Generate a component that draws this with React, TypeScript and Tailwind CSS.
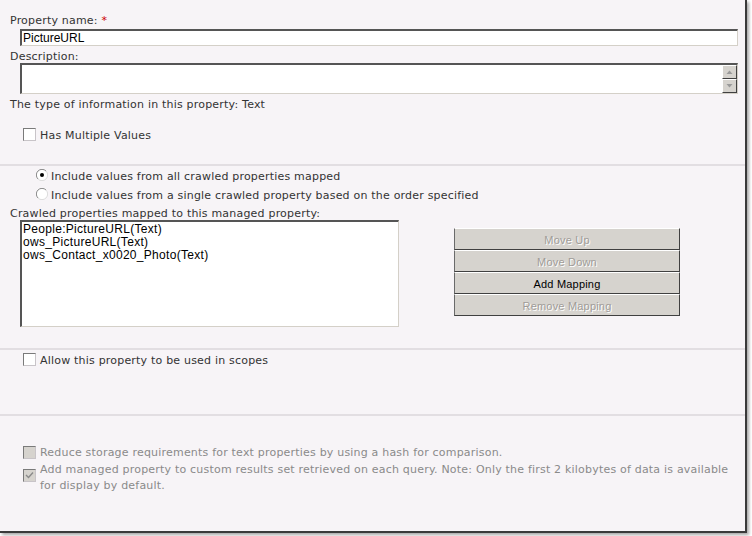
import React from "react";

const labelFont = "font-['DejaVu_Sans',Verdana,sans-serif] text-[11px] tracking-[0.2px] leading-[16px]";
const fieldFont = "font-['Liberation_Sans',Arial,sans-serif] text-[12px] text-black";

function Separator() {
  return <div className="h-[2px] w-full bg-[#e2dee2]" />;
}

function Checkbox({ checked = false, disabled = false }: { checked?: boolean; disabled?: boolean }) {
  return (
    <span
      className={`flex h-[13px] w-[13px] shrink-0 items-center justify-center border border-t-[#7a7a7a] border-l-[#7a7a7a] border-b-[#c8c4c8] border-r-[#c8c4c8] ${
        disabled ? "bg-[#d6d3ce]" : "bg-white"
      }`}
    >
      {checked && (
        <svg width="9" height="9" viewBox="0 0 9 9">
          <path d="M1 4 L3.5 6.5 L8 1.5" fill="none" stroke={disabled ? "#8a8a8a" : "#000"} strokeWidth="1.4" />
        </svg>
      )}
    </span>
  );
}

function Radio({ checked = false }: { checked?: boolean }) {
  return (
    <svg width="12" height="12" viewBox="0 0 12 12" className="mt-[2px] shrink-0">
      <circle cx="6" cy="6" r="5.5" fill="#fff" />
      <path d="M10 2 A5.5 5.5 0 0 0 2 10" fill="none" stroke="#8a8a8a" strokeWidth="1" />
      <path d="M2 10 A5.5 5.5 0 0 0 10 2" fill="none" stroke="#dcdcdc" strokeWidth="1" />
      {checked && <circle cx="6" cy="6" r="2" fill="#000" />}
    </svg>
  );
}

function ScrollButton({ up }: { up?: boolean }) {
  return (
    <div className="flex h-[14px] w-[15px] items-center justify-center border border-t-white border-l-white border-b-[#404040] border-r-[#404040] bg-[#d6d3ce]">
      <svg width="7" height="4" viewBox="0 0 7 4">
        <path d={up ? "M0.5 4 L3.5 0.5 L6.5 4 Z" : "M0.5 0 L3.5 3.5 L6.5 0 Z"} fill="#9a9a9a" />
      </svg>
    </div>
  );
}

function ActionButton({ label, enabled = false }: { label: string; enabled?: boolean }) {
  return (
    <div
      className={`flex h-[22px] w-[226px] items-center justify-center border border-t-white border-l-[#6a6a6a] border-b-[#404040] border-r-[#404040] bg-[#d6d3ce] pt-[1px] font-['Liberation_Sans',Tahoma,sans-serif] text-[11px] ${
        enabled ? "text-black" : "text-[#a09c98] [text-shadow:1px_1px_0_#fff]"
      }`}
    >
      {label}
    </div>
  );
}

function CheckRow({ label, className = "" }: { label: string; className?: string }) {
  return (
    <div className={`ml-[13px] flex h-[16px] items-start gap-[4px] ${className}`}>
      <span className="mt-[2px]">
        <Checkbox />
      </span>
      <span className="pt-[2px]">{label}</span>
    </div>
  );
}

export default function App() {
  const crawled = ["People:PictureURL(Text)", "ows_PictureURL(Text)", "ows_Contact_x0020_Photo(Text)"];

  return (
    <div className="h-[536px] w-[752px] bg-white">
      <div className="h-[533px] w-[747px] border-r-2 border-b-2 border-[#3a3a3a] bg-[#f7f4f7] text-[#333] shadow-[2px_2px_3px_rgba(0,0,0,0.35)]">
        {/* name / description */}
        <div className={`px-[10px] pt-[11px] ${labelFont}`}>
          <div className="h-[16px] pt-[2px]">
            Property name: <span className="text-[#cc0000]">*</span>
          </div>
          <div
            className={`ml-[10px] mt-[2px] flex h-[17px] w-[718px] items-center border-t-2 border-l-2 border-b border-r border-t-[#555] border-l-[#555] border-b-[#d4d0c8] border-r-[#d4d0c8] bg-white pl-[1px] tracking-normal ${fieldFont}`}
          >
            PictureURL
          </div>
          <div className="mt-[1px] h-[16px] pt-[2px]">Description:</div>
          <div className="ml-[10px] flex h-[31px] w-[718px] justify-end border-t-2 border-l-2 border-b border-r border-t-[#555] border-l-[#555] border-b-[#d4d0c8] border-r-[#d4d0c8] bg-white">
            <div className="flex flex-col">
              <ScrollButton up />
              <ScrollButton />
            </div>
          </div>
          <div className="mt-[1px] h-[16px] pt-[2px]">The type of information in this property: Text</div>
          <CheckRow label="Has Multiple Values" className="mt-[15px]" />
          <div className="h-[22px]" />
        </div>
        <Separator />

        {/* crawled property mappings */}
        <div className={`px-[10px] ${labelFont}`}>
          <div className="ml-[26px] mt-[1px] flex h-[16px] items-start gap-[3px]">
            <Radio checked />
            <span className="pt-[2px]">Include values from all crawled properties mapped</span>
          </div>
          <div className="ml-[26px] mt-[3px] flex h-[16px] items-start gap-[3px]">
            <Radio />
            <span className="pt-[2px]">Include values from a single crawled property based on the order specified</span>
          </div>
          <div className="mt-[2px] h-[16px] pt-[2px]">Crawled properties mapped to this managed property:</div>
          <div className="ml-[10px] flex items-start">
            <div className="h-[107px] w-[379px] border-t-2 border-l-2 border-b border-r border-t-[#555] border-l-[#555] border-b-[#d4d0c8] border-r-[#d4d0c8] bg-white pl-[1px] pt-[1px]">
              {crawled.map(item => (
                <div key={item} className={`h-[13px] leading-[13px] tracking-[0.3px] ${fieldFont}`}>
                  {item}
                </div>
              ))}
            </div>
            <div className="ml-[55px] mt-[8px] flex flex-col">
              <ActionButton label="Move Up" />
              <ActionButton label="Move Down" />
              <ActionButton label="Add Mapping" enabled />
              <ActionButton label="Remove Mapping" />
            </div>
          </div>
          <div className="h-[21px]" />
        </div>
        <Separator />

        {/* scopes */}
        <div className={`px-[10px] ${labelFont}`}>
          <CheckRow label="Allow this property to be used in scopes" className="mt-[1px]" />
          <div className="h-[47px]" />
        </div>
        <Separator />

        {/* advanced */}
        <div className={`px-[10px] text-[#8a8a8a] ${labelFont}`}>
          <div className="ml-[13px] mt-[28px] flex h-[16px] items-start gap-[4px]">
            <span className="mt-[2px]">
              <Checkbox disabled />
            </span>
            <span className="pt-[1px]">Reduce storage requirements for text properties by using a hash for comparison.</span>
          </div>
          <div className="ml-[13px] flex items-start gap-[4px]">
            <span className="mt-[9px]">
              <Checkbox checked disabled />
            </span>
            <span className="whitespace-nowrap pt-[2px]">
              Add managed property to custom results set retrieved on each query. Note: Only the first 2 kilobytes of data is available
              <br />
              for display by default.
            </span>
          </div>
        </div>
      </div>
    </div>
  );
}
